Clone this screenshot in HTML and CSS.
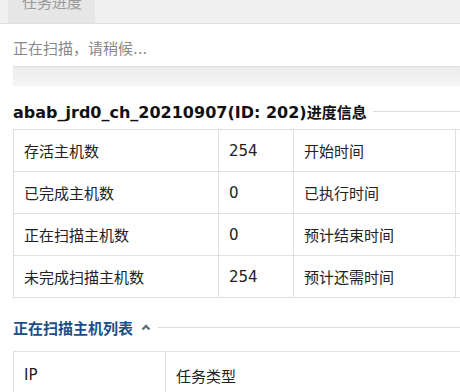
FILE: index.html
```html
<!doctype html>
<html lang="zh-CN">
<head>
    <meta charset="utf-8"/>
    <title>任务进度</title>
    <link rel="stylesheet" href="styles.css">
</head>
<body>
    <div class="page">
        <div class="tabs">
            <span class="tab">任务进度</span>
        </div>

        <div class="content">
            <p class="status">正在扫描，请稍候...</p>
            <div class="progress"><div class="bar"></div></div>

            <div class="legend">
                <span class="legend-title"><span class="latin">abab_jrd0_ch_20210907(ID: 202)</span>进度信息</span>
                <span class="legend-line"></span>
            </div>
            <table class="info">
                <colgroup>
                    <col class="c1"><col class="c2"><col class="c3"><col class="c4">
                </colgroup>
                <tr><td>存活主机数</td><td>254</td><td>开始时间</td><td></td></tr>
                <tr><td>已完成主机数</td><td>0</td><td>已执行时间</td><td></td></tr>
                <tr><td>正在扫描主机数</td><td>0</td><td>预计结束时间</td><td></td></tr>
                <tr><td>未完成扫描主机数</td><td>254</td><td>预计还需时间</td><td></td></tr>
            </table>

            <div class="legend legend-blue">
                <span class="legend-title">正在扫描主机列表</span>
                <svg class="chev" width="10" height="8" viewBox="0 0 10 8">
                    <path d="M1.5 6.5 L5 3 L8.5 6.5" fill="none" stroke="#5c7282" stroke-width="2.4"/>
                </svg>
                <span class="legend-line"></span>
            </div>
            <table class="hosts">
                <colgroup>
                    <col class="h1"><col class="h2">
                </colgroup>
                <tr><td>IP</td><td>任务类型</td></tr>
            </table>
        </div>
    </div>
</body>
</html>
```

FILE: styles.css
```css
html, body {
    margin: 0;
    padding: 0;
    overflow: hidden;
    background: #fff;
}

body {
    font-family: "DejaVu Sans", "Noto Sans CJK SC", sans-serif;
    font-size: 15px;
    color: #222;
}

.page {
    margin-top: -13px;
}

.tabs {
    height: 36px;
    background: #f0f0f0;
    border-bottom: 1px solid #e0e0e0;
    padding-left: 8px;
}

.tab {
    display: inline-block;
    height: 36px;
    line-height: 32px;
    padding: 0 13px 0 14px;
    background: #e6e6e6;
    color: #999;
}

.content {
    padding-left: 13px;
}

.status {
    margin: 0;
    padding-top: 14px;
    line-height: 22px;
    color: #888;
    font-size: 15px;
}

.progress {
    margin-top: 6px;
    height: 20px;
    background: linear-gradient(#ebebeb, #f5f5f5);
    box-shadow: inset 0 1px 1px rgba(0, 0, 0, 0.06);
}

.bar {
    width: 0;
    height: 100%;
}

.legend {
    display: flex;
    align-items: center;
    margin-top: 14px;
    height: 22px;
}

.legend-title {
    font-weight: bold;
    color: #111;
    white-space: nowrap;
}

.latin {
    font-size: 16px;
}

.legend-line {
    flex: 1;
    height: 1px;
    background: #ddd;
    margin-left: 6px;
}

.legend-blue {
    margin-top: 18px;
}

.legend-blue .legend-title {
    color: #1d4f86;
}

.chev {
    margin-left: 8px;
}

.legend-blue .legend-line {
    margin-left: 7px;
}

table {
    border-collapse: collapse;
    table-layout: fixed;
    white-space: nowrap;
}

td {
    border: 1px solid #e0e0e0;
    padding: 0 0 0 10px;
    color: #222;
}

.info {
    margin-top: 7px;
    width: 560px;
}

.info td {
    height: 41px;
}

.c1 { width: 205px; }
.c2 { width: 75px; }
.c3 { width: 162px; }
.c4 { width: 118px; }

.hosts {
    margin-top: 13px;
    width: 560px;
}

.hosts td {
    height: 46px;
}

.h1 { width: 152px; }
.h2 { width: 408px; }
```
